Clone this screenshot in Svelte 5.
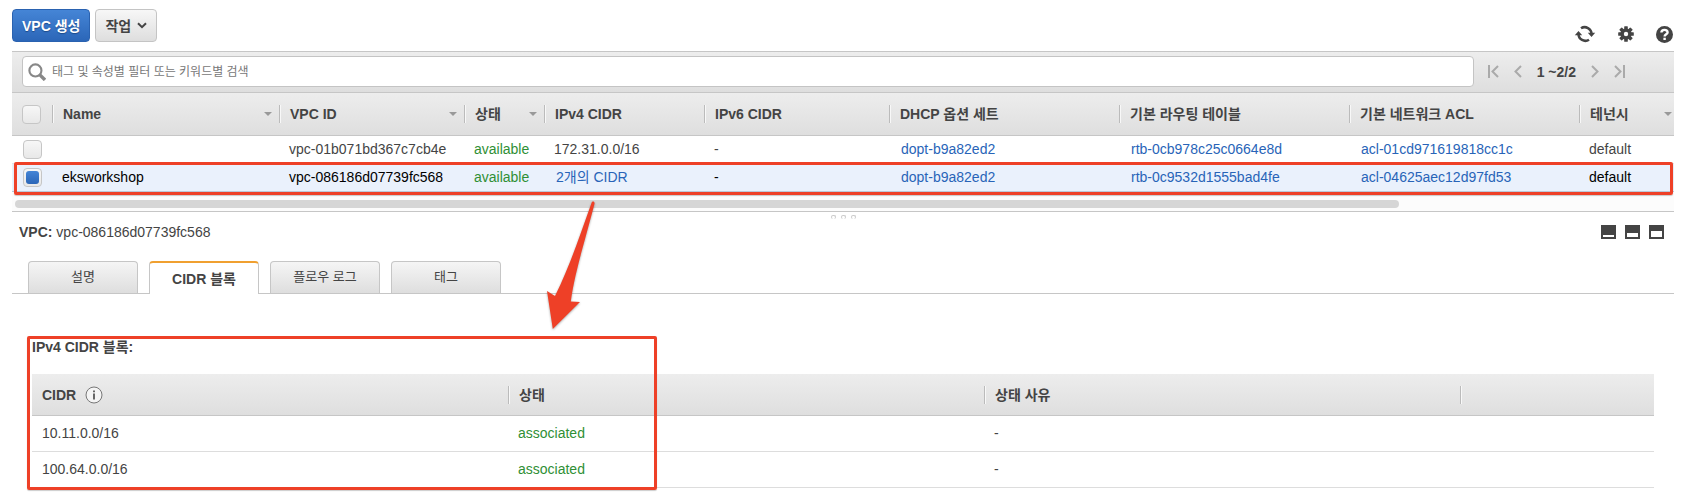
<script>
  const columns = [
    { label: 'Name', width: 227, sort: true },
    { label: 'VPC ID', width: 185, sort: true },
    { label: '상태', width: 80, sort: true },
    { label: 'IPv4 CIDR', width: 160 },
    { label: 'IPv6 CIDR', width: 185 },
    { label: 'DHCP 옵션 세트', width: 230 },
    { label: '기본 라우팅 테이블', width: 230 },
    { label: '기본 네트워크 ACL', width: 230 },
    { label: '테넌시', sort: true }
  ];

  let vpcs = $state([
    {
      selected: false, name: '', id: 'vpc-01b071bd367c7cb4e', state: 'available',
      cidr: '172.31.0.0/16', cidrLink: false, dhcp: 'dopt-b9a82ed2',
      route: 'rtb-0cb978c25c0664e8d', acl: 'acl-01cd971619818cc1c', tenancy: 'default'
    },
    {
      selected: true, name: 'eksworkshop', id: 'vpc-086186d07739fc568', state: 'available',
      cidr: '2개의 CIDR', cidrLink: true, dhcp: 'dopt-b9a82ed2',
      route: 'rtb-0c9532d1555bad4fe', acl: 'acl-04625aec12d97fd53', tenancy: 'default'
    }
  ]);

  const tabs = ['설명', 'CIDR 블록', '플로우 로그', '태그'];
  let activeTab = $state(1);

  const blocks = ['10.11.0.0/16', '100.64.0.0/16'];
  const panes = [10, 8, 6];
</script>

<main>
  <header class="actions">
    <button class="btn primary">VPC 생성</button>
    <button class="btn">작업
      <svg width="10" height="7" viewBox="0 0 10 7"><path d="M1 1.2 5 5.2 9 1.2" fill="none" stroke="#444" stroke-width="2" /></svg>
    </button>
    <div class="tools">
      <button class="icon" aria-label="새로 고침">
        <svg width="22" height="18" viewBox="0 0 22 18">
          <path d="M7 3.300A6.800 6.800 0 0 1 17.500 9M15 14.700A6.800 6.800 0 0 1 4.500 9" fill="none" stroke="#444" stroke-width="2.500" />
          <path d="M13.800 7.800h7.400L17.500 12zM.8 10.200h7.400L4.500 6z" fill="#444" />
        </svg>
      </button>
      <button class="icon" aria-label="설정">
        <svg width="16" height="16" viewBox="-8 -8 16 16" fill="#444">
          {#each [0, 45, 90, 135] as angle}
            <rect x="-1.800" y="-7.800" width="3.600" height="15.600" rx=".6" transform="rotate({angle})" />
          {/each}
          <circle r="5.600" />
          <circle r="2.200" fill="#fff" />
        </svg>
      </button>
      <button class="icon" aria-label="도움말">
        <svg width="17" height="17" viewBox="0 0 17 17">
          <circle cx="8.500" cy="8.500" r="8.500" fill="#444" />
          <path d="M5.400 6.600C5.400 3 11.700 3 11.600 6.400 11.500 8.400 8.600 8.200 8.600 10.600" fill="none" stroke="#fff" stroke-width="2.400" />
          <rect x="7.400" y="11.700" width="2.400" height="2.300" fill="#fff" />
        </svg>
      </button>
    </div>
  </header>

  <section class="filter">
    <label class="search">
      <svg width="18" height="18" viewBox="0 0 17 17"><circle cx="7" cy="7" r="5.700" fill="none" stroke="#888" stroke-width="2" /><path d="m11 11 5 5" stroke="#888" stroke-width="3.200" /></svg>
      <input type="text" aria-label="VPC 필터" placeholder="태그 및 속성별 필터 또는 키워드별 검색" />
    </label>
    <nav class="pager">
      <button class="icon" aria-label="첫 페이지"><svg width="11" height="14" viewBox="0 0 11 14"><path d="M1 0v13M10 1 4.500 6.500 10 12" /></svg></button>
      <button class="icon" aria-label="이전 페이지"><svg width="8" height="14" viewBox="0 0 8 14"><path d="M7 1 1.500 6.500 7 12" /></svg></button>
      <span>1 ~2/2</span>
      <button class="icon" aria-label="다음 페이지"><svg width="8" height="14" viewBox="0 0 8 14"><path d="M1 1 6.500 6.500 1 12" /></svg></button>
      <button class="icon" aria-label="마지막 페이지"><svg width="11" height="14" viewBox="0 0 11 14"><path d="M10 0v13M1 1 6.500 6.500 1 12" /></svg></button>
    </nav>
  </section>

  <section class="list">
    <table class="vpcs">
      <colgroup>
        <col style="width: 40px" />
        {#each columns as column}
          <col style={column.width ? `width: ${column.width}px` : undefined} />
        {/each}
      </colgroup>
      <thead>
        <tr>
          <th class="pick"><input type="checkbox" aria-label="모두 선택" /></th>
          {#each columns as column}
            <th><div class="head">{column.label}{#if column.sort}<i class="caret"></i>{/if}</div></th>
          {/each}
        </tr>
      </thead>
      <tbody>
        {#each vpcs as vpc}
          <tr class:selected={vpc.selected}>
            <td class="pick"><input type="checkbox" aria-label={vpc.id} bind:checked={vpc.selected} /></td>
            <td>{vpc.name}</td>
            <td>{vpc.id}</td>
            <td class="ok">{vpc.state}</td>
            <td>{#if vpc.cidrLink}<a href="#cidr">{vpc.cidr}</a>{:else}{vpc.cidr}{/if}</td>
            <td>-</td>
            <td><a href="#dhcp">{vpc.dhcp}</a></td>
            <td><a href="#route">{vpc.route}</a></td>
            <td><a href="#acl">{vpc.acl}</a></td>
            <td>{vpc.tenancy}</td>
          </tr>
        {/each}
      </tbody>
    </table>
    <div class="mark row-mark"></div>
    <div class="track"><div class="thumb"></div></div>
  </section>

  <div class="grip"><i></i><i></i><i></i></div>

  <section class="details">
    <div class="title">
      <span><b>VPC:</b> vpc-086186d07739fc568</span>
      <div class="panes">
        {#each panes as top}
          <button class="icon" aria-label="창 크기"><svg width="15" height="14" viewBox="0 0 15 14"><rect width="15" height="14" fill="#444" /><rect x="2" y={top} width="11" height={12 - top} fill="#fff" /></svg></button>
        {/each}
      </div>
    </div>

    <div class="tabs" role="tablist">
      {#each tabs as tab, i}
        <button role="tab" aria-selected={activeTab === i} class:active={activeTab === i} onclick={() => (activeTab = i)}>{tab}</button>
      {/each}
    </div>

    <div class="panel">
      <h2>IPv4 CIDR 블록:</h2>
      <table class="blocks">
        <colgroup><col /><col /><col /><col class="rest" /></colgroup>
        <thead>
          <tr>
            <th><div class="head">CIDR
              <svg class="info" width="18" height="18" viewBox="0 0 18 18"><circle cx="9" cy="9" r="8" fill="#f4f4f4" stroke="#777" /><path d="M9 7.500V13.500M9 4.500v1.800" stroke="#444" stroke-width="1.600" /></svg>
            </div></th>
            <th><div class="head">상태</div></th>
            <th><div class="head">상태 사유</div></th>
            <th><div class="head"></div></th>
          </tr>
        </thead>
        <tbody>
          {#each blocks as block}
            <tr><td>{block}</td><td class="ok">associated</td><td>-</td><td></td></tr>
          {/each}
        </tbody>
      </table>
      <div class="mark block-mark"></div>
    </div>
  </section>

  <svg class="arrow" width="50" height="140" viewBox="0 0 50 140">
    <path d="M46.500 3C47.200.8 50 1.200 49.500 3.800 38 48 30 72 25.800 101.500L35 102 7.800 129 2 91 10 96C24 68 34 38 46.500 3Z" fill="#ee4027" />
  </svg>
</main>

<style>
  :global(body) {
    background: #fff;
  }

  main {
    position: relative;
    margin: 0 7px 0 12px;
    padding: 9px 0 12px;
    color: #444;
    font: 14px/20px "Liberation Sans", "Noto Sans CJK KR", sans-serif;
  }

  button,
  input {
    font: inherit;
    color: inherit;
  }

  .icon {
    display: flex;
    padding: 0;
    border: 0;
    background: none;
  }

  .actions {
    display: flex;
    align-items: flex-start;
    gap: 5px;
    height: 42px;
  }

  .btn {
    display: flex;
    align-items: center;
    gap: 6px;
    height: 33px;
    padding: 0 9px;
    border: 1px solid #c4c4c4;
    border-radius: 4px;
    background: linear-gradient(#f7f7f7, #dedede);
    font-weight: bold;
  }

  .primary {
    border-color: #2a62b0;
    background: linear-gradient(#4585d6, #2b66b8);
    color: #fff;
    text-shadow: 0 1px 1px #1d4a8a;
  }

  .tools {
    display: flex;
    align-items: center;
    gap: 22px;
    margin: 16px 1px 0 auto;
  }

  .filter {
    display: flex;
    gap: 14px;
    padding: 4px 49px 5px 10px;
    border: solid #c6c6c6;
    border-width: 1px 0;
    background: linear-gradient(#ededed, #dedede);
  }

  .search {
    display: flex;
    flex: 1;
    align-items: center;
    gap: 6px;
    height: 29px;
    padding: 0 5px;
    border: 1px solid #c4c4c4;
    border-radius: 4px;
    background: #fff;
  }

  .search input {
    flex: 1;
    padding: 0;
    border: 0;
    outline: 0;
    background: none;
    font-size: 12px;
  }

  .search input::placeholder {
    color: #777;
    opacity: 1;
  }

  .pager {
    display: flex;
    align-items: center;
    gap: 15px;
    font-weight: bold;
  }

  .pager path {
    fill: none;
    stroke: #aaa;
    stroke-width: 2;
  }

  .list {
    position: relative;
    border-bottom: 1px solid #c6c6c6;
  }

  table {
    width: 100%;
    border-collapse: separate;
    border-spacing: 0;
    table-layout: fixed;
  }

  th,
  td {
    padding: 0;
    text-align: left;
    white-space: nowrap;
  }

  thead tr {
    background: linear-gradient(#ededed, #dedede);
  }

  th {
    height: 42px;
    border-bottom: 1px solid #c6c6c6;
  }

  .head {
    display: flex;
    align-items: center;
    height: 18px;
    padding: 0 7px 0 10px;
    border-left: 1px solid #bbb;
    box-shadow: inset 1px 0 #f8f8f8;
  }

  th:last-child .head {
    padding-right: 2px;
  }

  .caret {
    margin-left: auto;
    border: solid transparent;
    border-width: 4px 4px 0;
    border-top-color: #999;
  }

  .vpcs td {
    height: 25px;
    padding: 0 0 2px 10px;
    border-bottom: 1px solid #e4e4e4;
  }

  .vpcs th.pick {
    padding-left: 10px;
  }

  .vpcs td.pick {
    padding: 0 0 0 11px;
  }

  .selected td {
    border-color: #bcc8d8;
    background: #eaf1fc;
    color: #000;
  }

  .pick input {
    display: grid;
    place-items: center;
    width: 19px;
    height: 19px;
    margin: 0;
    appearance: none;
    border: 1px solid #c6c6c6;
    border-radius: 4px;
    background: linear-gradient(#f7f7f7, #e8e8e8);
  }

  .pick input:checked::before {
    width: 13px;
    height: 13px;
    border-radius: 3px;
    background: linear-gradient(#4585d6, #2b66b8);
    content: "";
  }

  a {
    color: #2864b8;
    text-decoration: none;
  }

  .vpcs a {
    padding-left: 2px;
  }

  .vpcs .ok,
  .blocks .ok {
    color: #2f8f35;
  }

  .track {
    padding: 8px 3px 3px;
    background: #fcfcfc;
  }

  .thumb {
    width: 83.6%;
    height: 8px;
    border-radius: 4px;
    background: #d6d6d6;
  }

  .mark {
    position: absolute;
    border: 3px solid #ee4027;
    border-radius: 2px;
    box-shadow: 0 1px 1px #0003;
    pointer-events: none;
  }

  .row-mark {
    inset: 69px 1px 16px 2px;
  }

  .grip {
    display: flex;
    justify-content: center;
    gap: 5px;
    padding: 3px 0;
  }

  .grip i {
    width: 3px;
    height: 3px;
    border: 1px solid #ccc;
    border-bottom: 0;
    border-radius: 2px;
  }

  .title {
    display: flex;
    align-items: center;
    justify-content: space-between;
    padding: 0 10px 0 7px;
  }

  .panes {
    display: flex;
    gap: 9px;
  }

  .tabs {
    display: flex;
    gap: 11px;
    margin-top: 19px;
    padding-left: 16px;
    border-bottom: 1px solid #c6c6c6;
  }

  .tabs button {
    width: 110px;
    height: 32px;
    padding: 0 0 2px;
    border: 1px solid #c6c6c6;
    border-bottom: 0;
    border-radius: 4px 4px 0 0;
    background: linear-gradient(#f5f5f5, #dedede);
    font-size: 13px;
  }

  .tabs .active {
    height: 33px;
    margin-bottom: -1px;
    padding: 0;
    border-top: 2px solid #f0a030;
    background: #fff;
    font-size: 14px;
    font-weight: bold;
  }

  .panel {
    position: relative;
    margin: 43px 20px 0;
  }

  h2 {
    margin: 0 0 17px;
    font-size: 14px;
    line-height: 20px;
  }

  .blocks col {
    width: 476px;
  }

  .blocks .rest {
    width: auto;
  }

  .blocks th {
    height: 41px;
  }

  .blocks th:first-child .head {
    padding-left: 9px;
    border-color: transparent;
    box-shadow: none;
  }

  .blocks td {
    height: 33px;
    padding: 0 0 2px 10px;
    border-bottom: 1px solid #ddd;
  }

  .info {
    margin-left: 9px;
  }

  .block-mark {
    inset: -1px auto -2px -5px;
    width: 624px;
  }

  .arrow {
    position: absolute;
    top: 200px;
    left: 533px;
    overflow: visible;
    filter: drop-shadow(0 1px 1px #0005);
    pointer-events: none;
  }
</style>
